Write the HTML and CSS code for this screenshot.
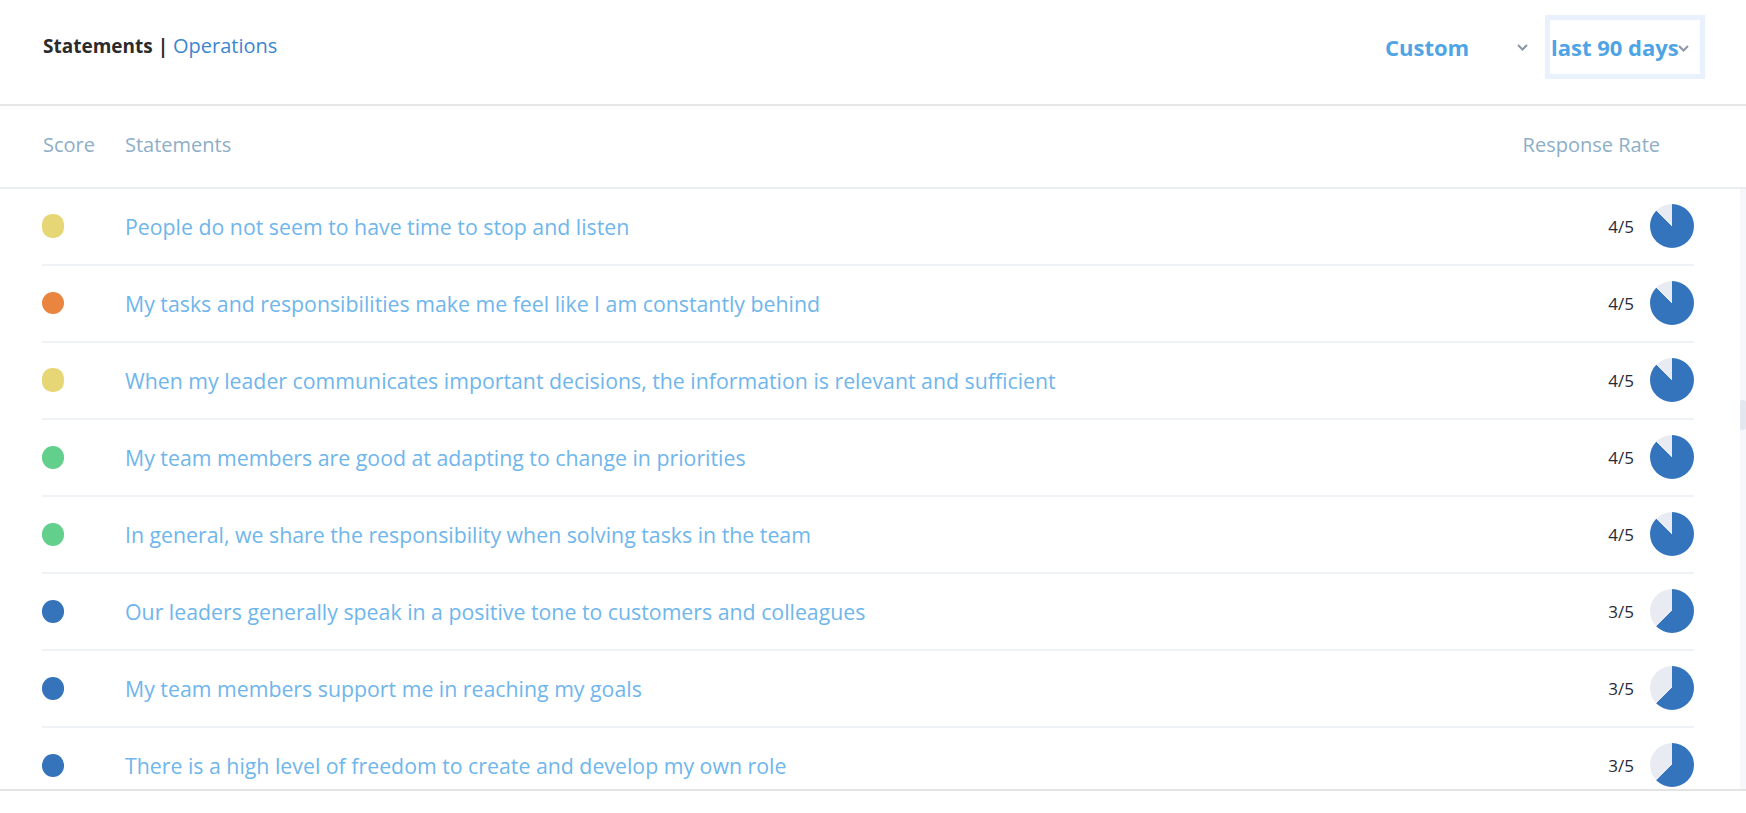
FILE: index.html
```html
<!DOCTYPE html>
<html>
<head>
<meta charset="utf-8">
<link rel="stylesheet" href="styles.css">
</head>
<body>
<div class="topbar">
  <div class="title"><span class="title-main">Statements |</span> <span class="title-link">Operations</span></div>
  <div class="filters">
    <div class="select select-custom">
      <span class="select-label">Custom</span>
      <svg class="chev" width="11" height="7" viewBox="0 0 11 7"><polyline points="1,1 5.5,5.5 10,1" fill="none" stroke="#8d95a7" stroke-width="2"/></svg>
    </div>
    <div class="select select-range">
      <span class="select-label">last 90 days</span>
      <svg class="chev" width="11" height="7" viewBox="0 0 11 7"><polyline points="1,1 5.5,5.5 10,1" fill="none" stroke="#8d95a7" stroke-width="2"/></svg>
    </div>
  </div>
</div>
<div class="colhead">
  <span class="col-score">Score</span>
  <span class="col-stmt">Statements</span>
  <span class="col-rate">Response Rate</span>
</div>
<div class="list-area">
  <div class="rows">
    <div class="row"><span class="dot dot-yellow"></span><span class="stmt">People do not seem to have time to stop and listen</span><span class="count">4/5</span><span class="pie" style="--p:87.5%"></span></div>
    <div class="row"><span class="dot dot-orange"></span><span class="stmt">My tasks and responsibilities make me feel like I am constantly behind</span><span class="count">4/5</span><span class="pie" style="--p:87.5%"></span></div>
    <div class="row"><span class="dot dot-yellow"></span><span class="stmt">When my leader communicates important decisions, the information is relevant and sufficient</span><span class="count">4/5</span><span class="pie" style="--p:87.5%"></span></div>
    <div class="row"><span class="dot dot-green"></span><span class="stmt">My team members are good at adapting to change in priorities</span><span class="count">4/5</span><span class="pie" style="--p:87.5%"></span></div>
    <div class="row"><span class="dot dot-green"></span><span class="stmt">In general, we share the responsibility when solving tasks in the team</span><span class="count">4/5</span><span class="pie" style="--p:87.5%"></span></div>
    <div class="row"><span class="dot dot-blue"></span><span class="stmt">Our leaders generally speak in a positive tone to customers and colleagues</span><span class="count">3/5</span><span class="pie" style="--p:62.5%"></span></div>
    <div class="row"><span class="dot dot-blue"></span><span class="stmt">My team members support me in reaching my goals</span><span class="count">3/5</span><span class="pie" style="--p:62.5%"></span></div>
    <div class="row"><span class="dot dot-blue"></span><span class="stmt">There is a high level of freedom to create and develop my own role</span><span class="count">3/5</span><span class="pie" style="--p:62.5%"></span></div>
  </div>
  <div class="track"><div class="thumb"></div></div>
</div>
</body>
</html>
```
FILE: styles.css
```css
* { box-sizing: border-box; }
html, body { margin: 0; padding: 0; background: #fff; }
body {
  font-family: "Open Sans", "Noto Sans", Lato, sans-serif;
  width: 1746px;
  height: 813px;
  overflow: hidden;
}
.topbar {
  height: 106px;
  display: flex;
  justify-content: space-between;
  align-items: flex-start;
  padding: 0 41px 0 43px;
  border-bottom: 2px solid #e6e6e6;
}
.title {
  margin-top: 32px;
  font-size: 19px;
  line-height: 28px;
}
.title-main { font-weight: 700; color: #2b2b2b; }
.title-link { color: #3b86cf; font-size: 20px; margin-left: 0; }
.filters {
  display: flex;
  align-items: center;
  margin-top: 15px;
}
.select {
  display: flex;
  align-items: center;
  height: 64px;
  font-size: 22px;
  font-weight: 700;
  color: #4ea4e4;
}
.select-custom {
  width: 160px;
  justify-content: space-between;
  padding-right: 17px;
}
.select-range {
  width: 160px;
  border: 5px solid #e9f1fc;
  padding-left: 1px;
}
.select-range .chev { margin-left: -1px; margin-top: 2px; }
.colhead {
  height: 83px;
  display: flex;
  align-items: center;
  padding: 0 86px 4px 43px;
  border-bottom: 2px solid #eaedf2;
  font-size: 20px;
  color: #8eaec7;
}
.col-score { width: 82px; }
.col-stmt { flex: 1; }
.list-area {
  height: 602px;
  display: flex;
  border-bottom: 2px solid #e3e3e3;
}
.rows {
  flex: 1;
  overflow: hidden;
  padding: 0 46px 0 42px;
}
.row {
  height: 77px;
  display: flex;
  align-items: center;
  border-bottom: 2px solid #eff2f6;
  padding-bottom: 1px;
}
.dot {
  width: 22px;
  height: 23px;
  border-radius: 11px;
  flex: none;
  margin-right: 61px;
}
.dot-yellow { background: #e6d676; height: 24px; border-radius: 10px; }
.dot-orange { background: #e9853f; height: 22px; }
.dot-green { background: #62d08c; }
.dot-blue { background: #3574bb; }
.stmt {
  flex: 1;
  font-size: 21.3px;
  color: #6fb6ec;
}
.count {
  font-size: 17px;
  color: #272a3b;
  margin-right: 16px;
}
.pie {
  width: 44px;
  height: 44px;
  border-radius: 50%;
  flex: none;
  background: conic-gradient(#3474bc 0 var(--p), #e8ecf2 var(--p) 100%);
}
.track {
  width: 6px;
  background: #f5f7fb;
  flex: none;
}
.thumb {
  margin-top: 211px;
  height: 30px;
  background: #e3e7ef;
  border-radius: 2px;
}
```
